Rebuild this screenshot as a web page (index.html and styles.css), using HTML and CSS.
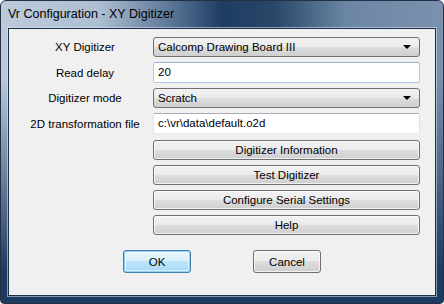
FILE: index.html
```html
<!DOCTYPE html>
<html lang="en">
<head>
  <meta charset="UTF-8">
  <title>Vr Configuration - XY Digitizer</title>
  <link rel="stylesheet" href="styles.css">
</head>
<body>
  <div class="window">
    <div class="titlebar">Vr Configuration - XY Digitizer</div>
    <div class="client">
      <div class="form">
        <label class="label">XY Digitizer</label>
        <div class="combo">
          <span>Calcomp Drawing Board III</span>
          <span class="arrow"></span>
        </div>

        <label class="label">Read delay</label>
        <div class="edit focused">20</div>

        <label class="label">Digitizer mode</label>
        <div class="combo">
          <span>Scratch</span>
          <span class="arrow"></span>
        </div>

        <label class="label">2D transformation file</label>
        <div class="edit">c:\vr\data\default.o2d</div>
      </div>

      <div class="actions">
        <button class="button">Digitizer Information</button>
        <button class="button">Test Digitizer</button>
        <button class="button">Configure Serial Settings</button>
        <button class="button">Help</button>
      </div>

      <div class="footer">
        <button class="button default">OK</button>
        <button class="button">Cancel</button>
      </div>
    </div>
  </div>
</body>
</html>
```

FILE: styles.css
```css
body, html {
  margin: 0;
  padding: 0;
  width: 444px;
  height: 304px;
  overflow: hidden;
  font-family: "Liberation Sans", Arial, sans-serif;
  font-size: 11.5px;
  color: #000;
  background: #fff;
}

/* Aero basic window frame */
.window {
  box-sizing: border-box;
  width: 444px;
  height: 304px;
  padding: 0 7px 7px 7px;
  border: 1px solid #223244;
  border-radius: 6px 6px 4px 4px;
  display: flex;
  flex-direction: column;
  background:
    linear-gradient(to bottom, rgba(29, 58, 96, 0) 0%, rgba(29, 58, 96, 0) 25%, #1d3a60 90%),
    linear-gradient(to right, #bccadb 0%, #aebfd3 22%, #5d7898 38%, #1f3c62 50%, #2a4769 62%, #6b86a4 78%, #7b92ad 100%);
}

.titlebar {
  height: 27px;
  line-height: 26px;
  font-size: 12.5px;
  color: #000;
  white-space: nowrap;
}

.client {
  flex: 1;
  background: #f0f0f0;
  border: 1px solid #1b2f4a;
  box-shadow: 0 0 0 1px rgba(220, 232, 245, 0.55);
  padding: 8px 15px 0 0;
  display: flex;
  flex-direction: column;
}

.form {
  display: grid;
  grid-template-columns: 144px 1fr;
  row-gap: 5px;
  align-items: center;
}

.label {
  text-align: center;
  padding-left: 8px;
}

.combo {
  box-sizing: border-box;
  height: 20px;
  border: 1px solid #707070;
  border-radius: 3px;
  background: linear-gradient(to bottom, #f2f2f2 0%, #ebebeb 50%, #dddddd 50%, #cfcfcf 100%);
  display: flex;
  align-items: center;
  justify-content: space-between;
  padding: 0 8px 0 4px;
}

.arrow {
  width: 0;
  height: 0;
  border-left: 4px solid transparent;
  border-right: 4px solid transparent;
  border-top: 4px solid #000;
}

.edit {
  box-sizing: border-box;
  height: 21px;
  line-height: 19px;
  padding-left: 4px;
  background: #fff;
  border: 1px solid #abadb3;
  border-left-color: #e2e3ea;
  border-right-color: #dbdfe6;
  border-bottom-color: #e3e9ef;
  border-radius: 2px;
}

.edit.focused {
  border-color: #a9c9e6;
  border-top-color: #8fb5d8;
}

.actions {
  display: flex;
  flex-direction: column;
  gap: 5px;
  margin: 6px 0 0 144px;
}

.button {
  box-sizing: border-box;
  height: 20px;
  padding: 0;
  font-family: "Liberation Sans", Arial, sans-serif;
  font-size: 11.5px;
  color: #000;
  border: 1px solid #707070;
  border-radius: 3px;
  background: linear-gradient(to bottom, #f2f2f2 0%, #ebebeb 50%, #dddddd 50%, #cfcfcf 100%);
  box-shadow: inset 0 0 0 1px rgba(255, 255, 255, 0.7);
}

.footer {
  display: flex;
  justify-content: center;
  gap: 62px;
  margin-top: 15px;
  padding-left: 15px;
}

.footer .button {
  width: 68px;
  height: 23px;
}

.button.default {
  border-color: #3c7fb1;
  background: linear-gradient(to bottom, #eaf6fd 0%, #d9f0fc 50%, #bee6fd 50%, #a7d9f5 100%);
  box-shadow: inset 0 0 0 1px #8fd2f5, inset 0 0 0 2px rgba(255, 255, 255, 0.5);
}
```
